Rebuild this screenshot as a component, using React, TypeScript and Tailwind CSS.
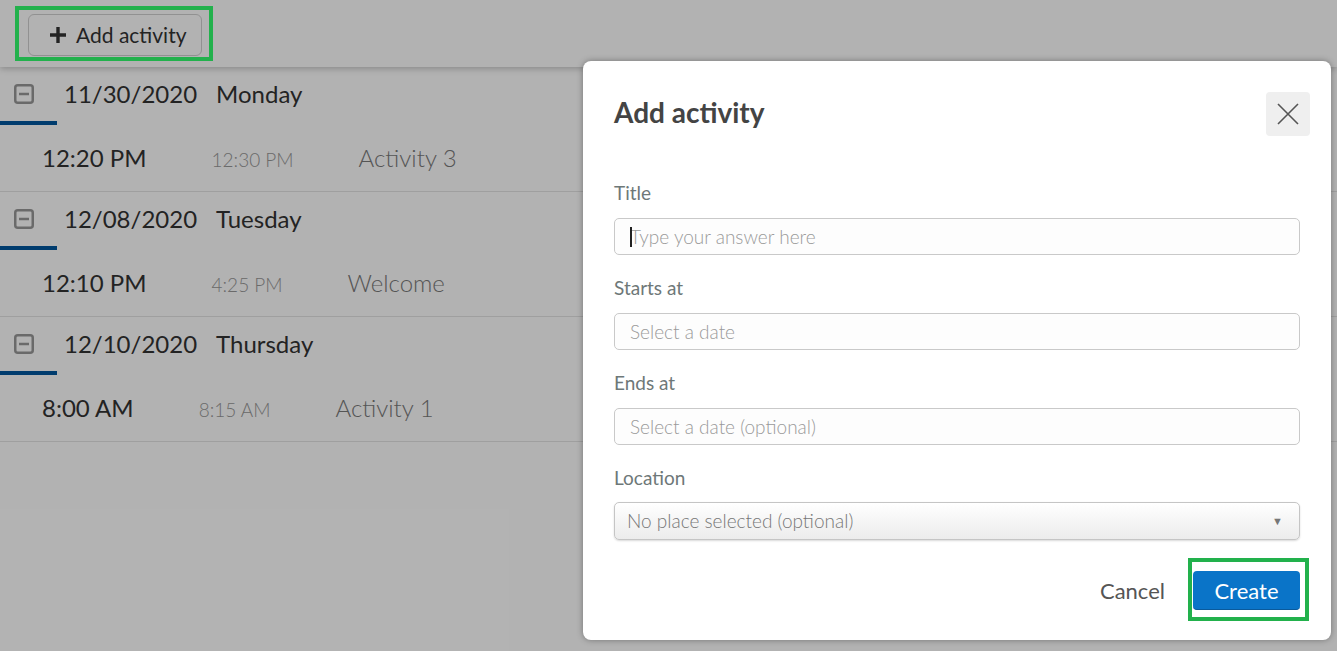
import React from "react";

const days = [
  { date: "11/30/2020", weekday: "Monday", start: "12:20 PM", end: "12:30 PM", name: "Activity 3" },
  { date: "12/08/2020", weekday: "Tuesday", start: "12:10 PM", end: "4:25 PM", name: "Welcome" },
  { date: "12/10/2020", weekday: "Thursday", start: "8:00 AM", end: "8:15 AM", name: "Activity 1" },
];

function MinusSquare() {
  return (
    <svg width="20" height="20" viewBox="0 0 20 20" className="shrink-0">
      <rect x="1.25" y="1.25" width="17.5" height="17.5" rx="2.5" fill="none" stroke="#999" strokeWidth="2.5" />
      <line x1="5" y1="10" x2="15" y2="10" stroke="#999" strokeWidth="2.5" />
    </svg>
  );
}

function Field({ label, placeholder, caret }: { label: string; placeholder: string; caret?: boolean }) {
  return (
    <div className="flex flex-col">
      <label className="text-[19px] leading-[24px] text-[#6e7878]">{label}</label>
      <div className="relative mt-[13px]">
        <input
          placeholder={placeholder}
          className="h-[37px] w-full rounded-[5px] border border-[#c9c9c9] bg-[#fdfdfd] px-[15px] text-[19px] font-light text-[#333] outline-none placeholder:text-[#9a9a9a]"
        />
        {caret && <span className="absolute left-[16px] top-[9px] h-[20px] w-[2px] bg-[#222]" />}
      </div>
    </div>
  );
}

export default function App() {
  return (
    <div className="relative h-[651px] w-[1337px] overflow-hidden bg-white font-['Lato',sans-serif] text-[#333]">
      <header className="relative h-[67px] pl-[28px] pt-[14px] shadow-[0_2px_6px_rgba(0,0,0,0.22)]">
        <button className="flex h-[42px] w-[174px] items-center gap-[9px] rounded-[6px] border border-[#d0d0d0] bg-white pl-[20px] text-[21px] text-[#333]">
          <svg width="18" height="18" viewBox="0 0 18 18">
            <path d="M9 1v16M1 9h16" stroke="#333" strokeWidth="3.4" />
          </svg>
          Add activity
        </button>
      </header>

      <main>
        {days.map((d) => (
          <section key={d.date}>
            <div className="flex flex-col">
              <div className="flex h-[54px] items-center pl-[14px]">
                <MinusSquare />
                <span className="ml-[30px] text-[24px] text-[#333]">{d.date}</span>
                <span className="ml-[19px] text-[24px] text-[#333]">{d.weekday}</span>
              </div>
              <div className="h-[4px] w-[57px] bg-[#00579e]" />
            </div>
            <div className="flex h-[67px] items-center border-b border-[#e4e4e4] pl-[42px]">
              <div className="flex items-baseline gap-[65px]">
                <span className="text-[24px] text-[#333]">{d.start}</span>
                <span className="text-[19px] font-light text-[#999]">{d.end}</span>
                <span className="text-[24px] font-light text-[#7a7a7a]">{d.name}</span>
              </div>
            </div>
          </section>
        ))}
      </main>

      <div className="absolute inset-0 bg-black/30" />

      <div className="absolute left-[583px] top-[61px] flex w-[748px] flex-col rounded-[8px] bg-white px-[31px] pb-[30px] pt-[31px] shadow-[0_0_6px_rgba(0,0,0,0.35)]">
        <div className="flex items-start justify-between">
          <h2 className="-mt-[2px] text-[28px] font-bold leading-[44px] text-[#444]">Add activity</h2>
          <button className="-mr-[10px] flex h-[44px] w-[44px] items-center justify-center rounded-[4px] bg-[#efefef]">
            <svg width="22" height="22" viewBox="0 0 22 22">
              <path d="M1 1l20 20M21 1L1 21" stroke="#555" strokeWidth="1.6" />
            </svg>
          </button>
        </div>

        <div className="mt-[45px] flex flex-col gap-[21px]">
          <Field label="Title" placeholder="Type your answer here" caret />
          <Field label="Starts at" placeholder="Select a date" />
          <Field label="Ends at" placeholder="Select a date (optional)" />
          <div className="flex flex-col">
            <label className="text-[19px] leading-[24px] text-[#6e7878]">Location</label>
            <div className="mt-[12px] flex h-[38px] items-center justify-between rounded-[5px] border border-[#c5c5c5] bg-gradient-to-b from-white to-[#ececec] pl-[12px] pr-[16px] shadow-[0_1px_2px_rgba(0,0,0,0.15)]">
              <span className="text-[19px] font-light text-[#777]">No place selected (optional)</span>
              <span className="text-[11px] text-[#777]">▼</span>
            </div>
          </div>
        </div>

        <div className="mt-[31px] flex items-center justify-end gap-[28px]">
          <button className="text-[22px] text-[#555]">Cancel</button>
          <button className="h-[39px] w-[107px] rounded-[4px] border-b border-[#0a5a9c] bg-[#0a74c8] text-[22px] text-white">
            Create
          </button>
        </div>
      </div>

      {/* annotation boxes */}
      <div className="pointer-events-none absolute left-[15px] top-[6px] h-[55px] w-[198px] border-[4px] border-[#22b14c]" />
      <div className="pointer-events-none absolute left-[1188px] top-[558px] h-[63px] w-[121px] border-[4px] border-[#22b14c]" />
    </div>
  );
}
